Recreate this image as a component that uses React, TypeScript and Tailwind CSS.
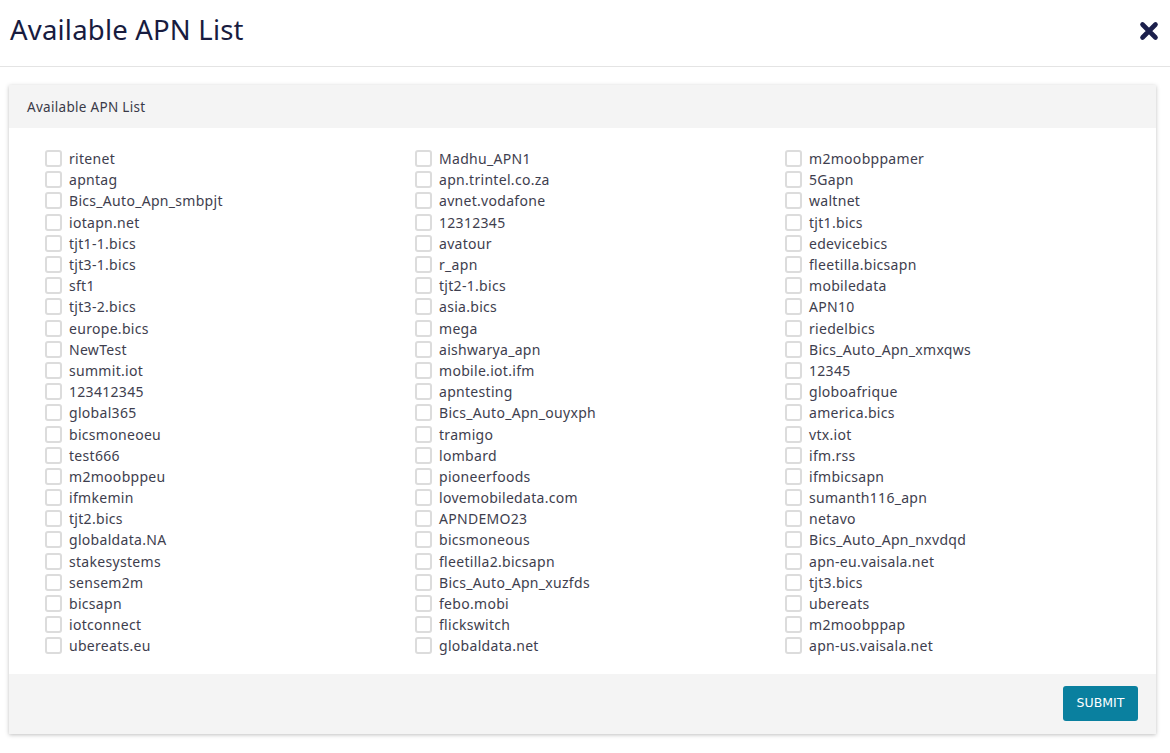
import React from "react";

const col1 = [
  "ritenet", "apntag", "Bics_Auto_Apn_smbpjt", "iotapn.net", "tjt1-1.bics", "tjt3-1.bics",
  "sft1", "tjt3-2.bics", "europe.bics", "NewTest", "summit.iot", "123412345",
  "global365", "bicsmoneoeu", "test666", "m2moobppeu", "ifmkemin", "tjt2.bics",
  "globaldata.NA", "stakesystems", "sensem2m", "bicsapn", "iotconnect", "ubereats.eu",
];
const col2 = [
  "Madhu_APN1", "apn.trintel.co.za", "avnet.vodafone", "12312345", "avatour", "r_apn",
  "tjt2-1.bics", "asia.bics", "mega", "aishwarya_apn", "mobile.iot.ifm", "apntesting",
  "Bics_Auto_Apn_ouyxph", "tramigo", "lombard", "pioneerfoods", "lovemobiledata.com", "APNDEMO23",
  "bicsmoneous", "fleetilla2.bicsapn", "Bics_Auto_Apn_xuzfds", "febo.mobi", "flickswitch", "globaldata.net",
];
const col3 = [
  "m2moobppamer", "5Gapn", "waltnet", "tjt1.bics", "edevicebics", "fleetilla.bicsapn",
  "mobiledata", "APN10", "riedelbics", "Bics_Auto_Apn_xmxqws", "12345", "globoafrique",
  "america.bics", "vtx.iot", "ifm.rss", "ifmbicsapn", "sumanth116_apn", "netavo",
  "Bics_Auto_Apn_nxvdqd", "apn-eu.vaisala.net", "tjt3.bics", "ubereats", "m2moobppap", "apn-us.vaisala.net",
];

function Item({ label }: { label: string }) {
  return (
    <label className="flex h-[21.2px] items-center gap-[7px]">
      <span className="h-[17px] w-[17px] shrink-0 rounded-[3px] border-2 border-[#dcdcdc] bg-white" />
      <span className="text-[14px] tracking-[0.3px] text-[#3e3e4e]">{label}</span>
    </label>
  );
}

function Column({ items }: { items: string[] }) {
  return (
    <div className="flex w-[370px] flex-col">
      {items.map((it) => (
        <Item key={it} label={it} />
      ))}
    </div>
  );
}

export default function App() {
  return (
    <div
      className="h-[753px] w-[1170px] bg-white"
      style={{ fontFamily: '"Noto Sans", "Open Sans", sans-serif' }}
    >
      <div className="flex h-[67px] items-center justify-between border-b border-[#e4e4e4] pb-[6px] pl-[10px] pr-[11px]">
        <h1 className="text-[27.5px] font-normal tracking-[0.2px] text-[#181c3f]">Available APN List</h1>
        <svg width="20" height="20" viewBox="0 0 20 20" className="mt-[2px]">
          <path d="M3.5 3.5 L16.5 16.5 M16.5 3.5 L3.5 16.5" stroke="#1b1f4b" strokeWidth="4.6" strokeLinecap="round" />
        </svg>
      </div>

      <div className="ml-[9px] mt-[18px] w-[1147px] shadow-[0_1px_4px_rgba(0,0,0,0.25)]">
        <div className="flex h-[43px] items-center bg-[#f4f4f4] pl-[18px] pt-[2px] text-[13.5px] tracking-[0.3px] text-[#3a3a48]">
          Available APN List
        </div>
        <div className="flex bg-white pb-[17px] pl-[36px] pt-[20px]">
          <Column items={col1} />
          <Column items={col2} />
          <Column items={col3} />
        </div>
        <div className="flex h-[60px] items-center justify-end bg-[#f4f4f4] pr-[18px]">
          <button
            className="h-[35px] w-[75px] rounded-[3px] bg-[#0a809f] text-[12.5px] text-white"
            style={{ fontFamily: '"DejaVu Sans", Verdana, sans-serif' }}
          >
            SUBMIT
          </button>
        </div>
      </div>
    </div>
  );
}
